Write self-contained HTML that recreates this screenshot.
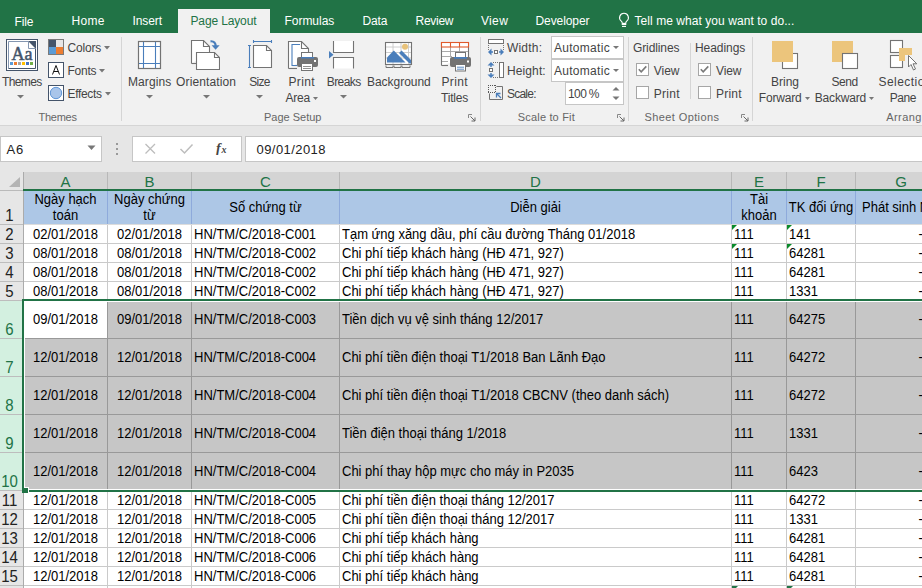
<!DOCTYPE html>
<html><head><meta charset="utf-8"><style>
html,body{margin:0;padding:0}
body{width:922px;height:588px;overflow:hidden;position:relative;background:#fff;font-family:"Liberation Sans",sans-serif}
.t{position:absolute;white-space:nowrap}
.r{position:absolute;display:block}
</style></head><body>
<div class="r" style="left:0px;top:0px;width:922px;height:33px;background:#217346;"></div>
<div class="r" style="left:178px;top:9px;width:92px;height:24px;background:#f1f1f1;"></div>
<div class="t" style="left:14.5px;top:16px;font-size:12px;line-height:12px;color:#fff;letter-spacing:-0.115px;">File</div>
<div class="t" style="left:71.5px;top:15px;font-size:12px;line-height:12px;color:#fff;letter-spacing:0.328px;">Home</div>
<div class="t" style="left:132.5px;top:15px;font-size:12px;line-height:12px;color:#fff;letter-spacing:-0.083px;">Insert</div>
<div class="t" style="left:190.5px;top:15px;font-size:12px;line-height:12px;color:#217346;letter-spacing:-0.139px;">Page Layout</div>
<div class="t" style="left:284.5px;top:15px;font-size:12px;line-height:12px;color:#fff;letter-spacing:-0.031px;">Formulas</div>
<div class="t" style="left:362.5px;top:15px;font-size:12px;line-height:12px;color:#fff;letter-spacing:-0.120px;">Data</div>
<div class="t" style="left:415.5px;top:15px;font-size:12px;line-height:12px;color:#fff;letter-spacing:-0.272px;">Review</div>
<div class="t" style="left:481.0px;top:15px;font-size:12px;line-height:12px;color:#fff;letter-spacing:0.334px;">View</div>
<div class="t" style="left:535.5px;top:15px;font-size:12px;line-height:12px;color:#fff;letter-spacing:-0.088px;">Developer</div>
<div class="t" style="left:634.5px;top:15px;font-size:12px;line-height:12px;color:#fff;letter-spacing:0.059px;">Tell me what you want to do...</div>
<svg class="r" style="left:617px;top:11px" width="14" height="18" viewBox="0 0 14 18"><path d="M7 2.3a4.4 4.4 0 0 0-2.75 7.85c.6.5 1 1.2 1 2v1.3h3.5v-1.3c0-.8.4-1.5 1-2A4.4 4.4 0 0 0 7 2.3z" fill="none" stroke="#fff" stroke-width="1.1"/><path d="M5.1 12.6h3.8" stroke="#fff" stroke-width="1.6"/><path d="M5 15.4h4" stroke="#fff" stroke-width="1.1"/></svg>
<div class="r" style="left:0px;top:33px;width:922px;height:92px;background:#f1f1f1;"></div>
<div class="r" style="left:0px;top:125px;width:922px;height:1px;background:#d5d5d5;"></div>
<div class="r" style="left:121px;top:37px;width:1px;height:84px;background:#d5d5d5;"></div>
<div class="r" style="left:480px;top:37px;width:1px;height:84px;background:#d5d5d5;"></div>
<div class="r" style="left:628px;top:37px;width:1px;height:84px;background:#d5d5d5;"></div>
<div class="r" style="left:752px;top:37px;width:1px;height:84px;background:#d5d5d5;"></div>
<div class="r" style="left:690px;top:43px;width:1px;height:56px;background:#d5d5d5;"></div>
<div class="t" style="left:2.0px;top:76px;font-size:12px;line-height:12px;color:#444;letter-spacing:-0.632px;">Themes</div>
<svg class="r" style="left:17px;top:95px" width="8" height="4" viewBox="0 0 8 4"><path d="M0 0H7L3.5 3.5Z" fill="#777"/></svg>
<div class="t" style="left:38.5px;top:112px;font-size:11px;line-height:11px;color:#666;letter-spacing:-0.250px;">Themes</div>
<div class="t" style="left:67.5px;top:42px;font-size:12px;line-height:12px;color:#444;letter-spacing:-0.197px;">Colors</div>
<div class="t" style="left:67.5px;top:65px;font-size:12px;line-height:12px;color:#444;letter-spacing:-0.254px;">Fonts</div>
<div class="t" style="left:67.5px;top:88px;font-size:12px;line-height:12px;color:#444;letter-spacing:-0.328px;">Effects</div>
<svg class="r" style="left:104px;top:46px" width="7" height="4" viewBox="0 0 7 4"><path d="M0 0H6L3 3.5Z" fill="#777"/></svg>
<svg class="r" style="left:99px;top:69px" width="7" height="4" viewBox="0 0 7 4"><path d="M0 0H6L3 3.5Z" fill="#777"/></svg>
<svg class="r" style="left:105px;top:92px" width="7" height="4" viewBox="0 0 7 4"><path d="M0 0H6L3 3.5Z" fill="#777"/></svg>
<svg class="r" style="left:6px;top:39px" width="32" height="32" viewBox="0 0 32 32"><rect x="0.5" y="0.5" width="31" height="31" fill="#fff" stroke="#44546a"/>
<path d="M2.5 29.5V2.5H22" fill="none" stroke="#8496b0"/>
<path d="M22.5 2.5L29.5 9.5V29.5H2.5" fill="none" stroke="#44546a" stroke-width="1"/>
<path d="M22 2H30V10Z" fill="#44546a"/><path d="M22.5 2.5V9.5H29.5" fill="#fff" stroke="#8496b0"/>
<text x="5.5" y="20.5" font-family="Liberation Serif" font-size="18" fill="#44546a" stroke="#44546a" stroke-width="0.5" textLength="21" lengthAdjust="spacingAndGlyphs">Aa</text>
<rect x="4" y="23" width="3" height="3" fill="#5b9bd5"/><rect x="8" y="23" width="3" height="3" fill="#ed7d31"/>
<rect x="12" y="23" width="3" height="3" fill="#a5a5a5"/><rect x="16" y="23" width="3" height="3" fill="#ffc000"/>
<rect x="20" y="23" width="3" height="3" fill="#4472c4"/><rect x="24" y="23" width="3" height="3" fill="#70ad47"/></svg>
<svg class="r" style="left:48px;top:39px" width="16" height="16" viewBox="0 0 16 16"><rect x="0.5" y="0.5" width="15" height="15" fill="#fff" stroke="#7a7a7a"/><rect x="1" y="1" width="7" height="7" fill="#44546a"/><rect x="8" y="1" width="7" height="7" fill="#e7e6e6"/><rect x="1" y="8" width="7" height="7" fill="#5b9bd5"/><rect x="8" y="8" width="7" height="7" fill="#ed7d31"/></svg>
<svg class="r" style="left:48px;top:62px" width="16" height="16" viewBox="0 0 16 16"><rect x="0.5" y="0.5" width="15" height="15" fill="#fff" stroke="#44546a"/><path d="M4.5 12.5L8 3.5L11.5 12.5M5.8 9.5H10.2" fill="none" stroke="#111" stroke-width="1"/></svg>
<svg class="r" style="left:48px;top:85px" width="16" height="16" viewBox="0 0 16 16"><rect x="0.5" y="0.5" width="15" height="15" fill="#fff" stroke="#44546a"/><circle cx="8" cy="8" r="5.7" fill="#a9c5ea" stroke="#5f95d6" stroke-width="1"/></svg>
<div class="t" style="left:127.9px;top:76px;font-size:12px;line-height:12px;color:#444;letter-spacing:0.119px;">Margins</div>
<div class="t" style="left:176.1px;top:76px;font-size:12px;line-height:12px;color:#444;letter-spacing:0.110px;">Orientation</div>
<div class="t" style="left:249.3px;top:76px;font-size:12px;line-height:12px;color:#444;letter-spacing:-0.715px;">Size</div>
<div class="t" style="left:288.5px;top:76px;font-size:12px;line-height:12px;color:#444;letter-spacing:0.328px;">Print</div>
<div class="t" style="left:285.5px;top:92px;font-size:12px;line-height:12px;color:#444;letter-spacing:-0.220px;">Area</div>
<div class="t" style="left:326.8px;top:76px;font-size:12px;line-height:12px;color:#444;letter-spacing:-0.592px;">Breaks</div>
<div class="t" style="left:366.9px;top:76px;font-size:12px;line-height:12px;color:#444;letter-spacing:-0.016px;">Background</div>
<div class="t" style="left:441.5px;top:76px;font-size:12px;line-height:12px;color:#444;letter-spacing:0.328px;">Print</div>
<div class="t" style="left:441.1px;top:92px;font-size:12px;line-height:12px;color:#444;letter-spacing:-0.207px;">Titles</div>
<div class="t" style="left:264.0px;top:112px;font-size:11px;line-height:11px;color:#666;letter-spacing:0.000px;">Page Setup</div>
<svg class="r" style="left:146px;top:95px" width="8" height="4" viewBox="0 0 8 4"><path d="M0 0H7L3.5 3.5Z" fill="#777"/></svg>
<svg class="r" style="left:203px;top:95px" width="8" height="4" viewBox="0 0 8 4"><path d="M0 0H7L3.5 3.5Z" fill="#777"/></svg>
<svg class="r" style="left:256px;top:95px" width="8" height="4" viewBox="0 0 8 4"><path d="M0 0H7L3.5 3.5Z" fill="#777"/></svg>
<svg class="r" style="left:340px;top:95px" width="8" height="4" viewBox="0 0 8 4"><path d="M0 0H7L3.5 3.5Z" fill="#777"/></svg>
<svg class="r" style="left:313px;top:97px" width="6" height="4" viewBox="0 0 6 4"><path d="M0 0H5L2.5 3Z" fill="#777"/></svg>
<svg class="r" style="left:468px;top:114px" width="8" height="8" viewBox="0 0 8 8"><path d="M0.5 4V0.5H4" fill="none" stroke="#888"/><path d="M2.5 2.5L7 7M7 3.5V7H3.5" fill="none" stroke="#666"/></svg>
<svg class="r" style="left:617px;top:114px" width="8" height="8" viewBox="0 0 8 8"><path d="M0.5 4V0.5H4" fill="none" stroke="#888"/><path d="M2.5 2.5L7 7M7 3.5V7H3.5" fill="none" stroke="#666"/></svg>
<svg class="r" style="left:741px;top:114px" width="8" height="8" viewBox="0 0 8 8"><path d="M0.5 4V0.5H4" fill="none" stroke="#888"/><path d="M2.5 2.5L7 7M7 3.5V7H3.5" fill="none" stroke="#666"/></svg>
<svg class="r" style="left:137px;top:40px" width="26" height="30" viewBox="0 0 26 30"><rect x="1.5" y="1.5" width="22" height="27" fill="#fff" stroke="#737373" stroke-width="1.2"/><path d="M6.5 2V28M18.5 2V28M2 6.5H23M2 23.5H23" stroke="#4a7ebb" stroke-width="1.1"/></svg>
<svg class="r" style="left:190px;top:38px" width="30" height="33" viewBox="0 0 30 33"><path d="M1.5 25.5V2.5H13.5L19.5 8.5V14" fill="#fff" stroke="#737373" stroke-width="1.1"/><path d="M13.5 2.5V8.5H19.5" fill="none" stroke="#737373" stroke-width="1.1"/>
<path d="M6.5 31.5V14.5H24.5L29.5 19.5V31.5Z" fill="#fff" stroke="#737373" stroke-width="1.1"/><path d="M24.5 14.5V19.5H29.5" fill="none" stroke="#737373" stroke-width="1.1"/>
<path d="M20.5 3.3C24 3 25.8 5 25.6 8.5" fill="none" stroke="#4a7ebb" stroke-width="2.2"/><path d="M21.6 7.2H29.6L25.6 11.8Z" fill="#4a7ebb"/><path d="M1.5 25.5H6" stroke="#737373" stroke-width="1.1"/></svg>
<svg class="r" style="left:246px;top:39px" width="28" height="31" viewBox="0 0 28 31"><path d="M7.5 6.5H20.5L25.5 11.5V28.5H7.5Z" fill="#fff" stroke="#737373" stroke-width="1.1"/><path d="M20.5 6.5V11.5H25.5" fill="none" stroke="#737373" stroke-width="1.1"/>
<path d="M7.5 2.5H25.5M7.5 1V4M25.5 1V4" stroke="#4a7ebb" stroke-width="1.1"/><path d="M3.5 6.5V28.5M2 6.5H5M2 28.5H5" stroke="#4a7ebb" stroke-width="1.1"/></svg>
<svg class="r" style="left:287px;top:40px" width="33" height="32" viewBox="0 0 33 32"><path d="M1.5 28.5V1.5H14.5L21.5 8.5V17" fill="#fff" stroke="#737373" stroke-width="1.1"/><path d="M14.5 1.5V8.5H21.5" fill="none" stroke="#737373" stroke-width="1.1"/><path d="M1.5 28.5H10" stroke="#737373" stroke-width="1.1"/>
<path d="M13 4.5H5V25.5H10" fill="none" stroke="#4a7ebb" stroke-width="1.1"/>
<rect x="14.5" y="12.5" width="11" height="6" fill="#fff" stroke="#737373"/>
<rect x="10" y="17" width="21" height="10" rx="2" fill="#737373"/><rect x="14" y="17" width="13" height="1.5" fill="#4a7ebb"/>
<rect x="14.5" y="23.5" width="11" height="7" fill="#fff" stroke="#737373"/><path d="M16 26.5H24M16 28.5H24" stroke="#737373" stroke-width="0.8"/><rect x="27" y="20" width="2" height="2" fill="#fff"/></svg>
<svg class="r" style="left:328px;top:40px" width="28" height="30" viewBox="0 0 28 30"><path d="M5.5 1V12.5H25.5V1" fill="#fff" stroke="#737373" stroke-width="1.1"/><path d="M5.5 28.5V17.5H25.5V28.5" fill="#fff" stroke="#737373" stroke-width="1.1"/>
<path d="M1 11L5.5 14.8L1 18.5Z" fill="#4a7ebb"/></svg>
<svg class="r" style="left:384px;top:41px" width="30" height="28" viewBox="0 0 30 28"><rect x="1.5" y="1.5" width="26" height="22" fill="#fff" stroke="#737373" stroke-width="1.1"/>
<path d="M9 2V23M17 2V23M24.5 2V23M2 6H27M2 11.5H27M2 17H27" stroke="#c8c8c8" stroke-width="0.9"/>
<path d="M3 21.5V16.5L9.8 9.6L21.5 21.5Z" fill="#4a7ebb"/><path d="M15 12L17.6 9.6L27 19V22.5H25.5Z" fill="#4a7ebb"/>
<circle cx="21" cy="5.8" r="3" fill="#e8c27a"/>
<path d="M2 24.5V26.5H9V24.5M10 24.5V26.5H17V24.5M18 24.5V26.5H26V24.5" fill="none" stroke="#737373" stroke-width="1"/></svg>
<svg class="r" style="left:440px;top:41px" width="32" height="31" viewBox="0 0 32 31"><path d="M1.5 24.5V1.5H28.5V16" fill="#fff" stroke="#737373" stroke-width="1.1"/><path d="M1.5 24.5H8" stroke="#737373" stroke-width="1.1"/>
<path d="M2 10.5H28M2 15.5H12M2 20.5H8M10.5 6V15M19.5 6V11" stroke="#a0a0a0" stroke-width="0.9"/>
<rect x="1.5" y="1.5" width="27" height="4.5" fill="#fff" stroke="#e05a2b" stroke-width="1.1"/><path d="M10.5 1.5V6M19.5 1.5V6" stroke="#e05a2b" stroke-width="1.1"/>
<rect x="15.5" y="11.5" width="10" height="6" fill="#fff" stroke="#737373"/>
<rect x="10" y="16" width="21" height="10" rx="2" fill="#737373"/><rect x="14" y="16" width="13" height="1.8" fill="#4a7ebb"/>
<rect x="15.5" y="23.5" width="10" height="6.5" fill="#fff" stroke="#737373"/><path d="M17 26.2H24M17 28.2H24" stroke="#4a7ebb" stroke-width="0.9"/><rect x="27" y="19.5" width="2" height="2" fill="#fff"/></svg>
<div class="t" style="left:506.9px;top:42px;font-size:12px;line-height:12px;color:#444;letter-spacing:0.217px;">Width:</div>
<div class="t" style="left:506.9px;top:65px;font-size:12px;line-height:12px;color:#444;letter-spacing:0.128px;">Height:</div>
<div class="t" style="left:506.9px;top:88px;font-size:12px;line-height:12px;color:#444;letter-spacing:-0.752px;">Scale:</div>
<div class="r" style="left:551px;top:36px;width:73px;height:23px;background:#fff;box-sizing:border-box;border:1px solid #c6c6c6"></div>
<div class="r" style="left:551px;top:59px;width:73px;height:23px;background:#fff;box-sizing:border-box;border:1px solid #c6c6c6"></div>
<div class="r" style="left:565px;top:82px;width:59px;height:23px;background:#fff;box-sizing:border-box;border:1px solid #c6c6c6"></div>
<div class="t" style="left:553.9px;top:42px;font-size:12px;line-height:12px;color:#444;letter-spacing:0.305px;">Automatic</div>
<div class="t" style="left:553.9px;top:65px;font-size:12px;line-height:12px;color:#444;letter-spacing:0.305px;">Automatic</div>
<div class="t" style="left:568.1px;top:88px;font-size:12px;line-height:12px;color:#444;letter-spacing:-0.658px;">100 %</div>
<svg class="r" style="left:613px;top:46px" width="7" height="4" viewBox="0 0 7 4"><path d="M0 0H6L3 3Z" fill="#777"/></svg>
<svg class="r" style="left:613px;top:69px" width="7" height="4" viewBox="0 0 7 4"><path d="M0 0H6L3 3Z" fill="#777"/></svg>
<svg class="r" style="left:612px;top:87px" width="8" height="4" viewBox="0 0 8 4"><path d="M0.5 3.5L4 0L7.5 3.5Z" fill="#777"/></svg>
<svg class="r" style="left:612px;top:96px" width="8" height="4" viewBox="0 0 8 4"><path d="M0.5 0.5L4 4L7.5 0.5Z" fill="#777"/></svg>
<div class="t" style="left:517.8px;top:112px;font-size:11px;line-height:11px;color:#666;letter-spacing:0.170px;">Scale to Fit</div>
<svg class="r" style="left:487px;top:38px" width="18" height="18" viewBox="0 0 18 18"><rect x="1.5" y="1.5" width="15" height="4" fill="#fff" stroke="#737373"/>
<path d="M1.5 7V12M16.5 7V12" stroke="#737373" stroke-dasharray="1 1"/>
<path d="M1 14L4.5 10.5V17.5Z M17 14L13.5 10.5V17.5Z" fill="#4a7ebb"/><path d="M3 14H6M12 14H15" stroke="#4a7ebb" stroke-width="1.4"/><rect x="7.5" y="12.5" width="3" height="3" fill="#fff" stroke="#737373"/></svg>
<svg class="r" style="left:487px;top:61px" width="18" height="18" viewBox="0 0 18 18"><rect x="12.5" y="1.5" width="4" height="15" fill="#fff" stroke="#737373"/>
<path d="M6 1.5H12M6 16.5H12" stroke="#737373" stroke-dasharray="1 1"/>
<path d="M4 1L0.5 4.5H7.5Z M4 17L0.5 13.5H7.5Z" fill="#4a7ebb"/><path d="M4 3V6M4 12V15" stroke="#4a7ebb" stroke-width="1.4"/><rect x="2.5" y="7.5" width="3" height="3" fill="#fff" stroke="#737373"/></svg>
<svg class="r" style="left:487px;top:84px" width="18" height="18" viewBox="0 0 18 18"><path d="M9.5 2.5H15.5V15.5H2.5V9.5" fill="none" stroke="#737373"/>
<path d="M1 1.5H9M1 8.5H9M1.5 1V9M8.5 1V9" fill="none" stroke="#555" stroke-dasharray="1 1"/>
<path d="M14 14L10 10" stroke="#4a7ebb" stroke-width="1.3"/><path d="M9.5 13.5V9.5H13.5" fill="none" stroke="#4a7ebb" stroke-width="1.3"/></svg>
<div class="t" style="left:633.0px;top:42px;font-size:12px;line-height:12px;color:#444;letter-spacing:-0.107px;">Gridlines</div>
<div class="t" style="left:695.0px;top:42px;font-size:12px;line-height:12px;color:#444;letter-spacing:-0.058px;">Headings</div>
<div class="t" style="left:653.7px;top:65px;font-size:12px;line-height:12px;color:#444;letter-spacing:0.001px;">View</div>
<div class="t" style="left:653.7px;top:88px;font-size:12px;line-height:12px;color:#444;letter-spacing:0.278px;">Print</div>
<div class="t" style="left:716.0px;top:65px;font-size:12px;line-height:12px;color:#444;letter-spacing:-0.099px;">View</div>
<div class="t" style="left:716.0px;top:88px;font-size:12px;line-height:12px;color:#444;letter-spacing:0.203px;">Print</div>
<div class="t" style="left:644.5px;top:112px;font-size:11px;line-height:11px;color:#666;letter-spacing:0.398px;">Sheet Options</div>
<svg class="r" style="left:636px;top:63px" width="13" height="13" viewBox="0 0 13 13"><rect x="0.5" y="0.5" width="12" height="12" fill="#fff" stroke="#a6a6a6"/><path d="M2.8 6.3L5.2 8.9L10.3 3.4" fill="none" stroke="#7a7a7a" stroke-width="1.6"/></svg>
<svg class="r" style="left:636px;top:86px" width="13" height="13" viewBox="0 0 13 13"><rect x="0.5" y="0.5" width="12" height="12" fill="#fff" stroke="#a6a6a6"/></svg>
<svg class="r" style="left:698px;top:63px" width="13" height="13" viewBox="0 0 13 13"><rect x="0.5" y="0.5" width="12" height="12" fill="#fff" stroke="#a6a6a6"/><path d="M2.8 6.3L5.2 8.9L10.3 3.4" fill="none" stroke="#7a7a7a" stroke-width="1.6"/></svg>
<svg class="r" style="left:698px;top:86px" width="13" height="13" viewBox="0 0 13 13"><rect x="0.5" y="0.5" width="12" height="12" fill="#fff" stroke="#a6a6a6"/></svg>
<div class="t" style="left:771.0px;top:76px;font-size:12px;line-height:12px;color:#444;letter-spacing:-0.004px;">Bring</div>
<div class="t" style="left:758.8px;top:92px;font-size:12px;line-height:12px;color:#444;letter-spacing:-0.169px;">Forward</div>
<div class="t" style="left:831.5px;top:76px;font-size:12px;line-height:12px;color:#444;letter-spacing:-0.477px;">Send</div>
<div class="t" style="left:814.8px;top:92px;font-size:12px;line-height:12px;color:#444;letter-spacing:-0.184px;">Backward</div>
<div class="t" style="left:878.5px;top:76px;font-size:12px;line-height:12px;color:#444;letter-spacing:0.453px;">Selection</div>
<div class="t" style="left:889.8px;top:92px;font-size:12px;line-height:12px;color:#444;letter-spacing:-0.444px;">Pane</div>
<div class="t" style="left:886.2px;top:112px;font-size:11px;line-height:11px;color:#666;letter-spacing:0.45px">Arrange</div>
<svg class="r" style="left:805px;top:97px" width="6" height="4" viewBox="0 0 6 4"><path d="M0 0H5L2.5 3Z" fill="#777"/></svg>
<svg class="r" style="left:869px;top:97px" width="6" height="4" viewBox="0 0 6 4"><path d="M0 0H5L2.5 3Z" fill="#777"/></svg>
<svg class="r" style="left:771px;top:40px" width="28" height="30" viewBox="0 0 28 30"><rect x="11.5" y="13.5" width="15" height="15" fill="#fff" stroke="#737373" stroke-width="1.1"/><rect x="1" y="1" width="21" height="21" fill="#ecc57c"/></svg>
<svg class="r" style="left:831px;top:40px" width="28" height="30" viewBox="0 0 28 30"><rect x="1" y="1" width="21" height="21" fill="#ecc57c"/><rect x="11.5" y="13.5" width="15" height="15" fill="#fff" stroke="#737373" stroke-width="1.1"/></svg>
<svg class="r" style="left:889px;top:39px" width="33" height="33" viewBox="0 0 33 33"><rect x="1.5" y="1.5" width="12" height="12" fill="#fff" stroke="#737373" stroke-width="1.1"/><rect x="1.5" y="16.5" width="12" height="12" fill="#fff" stroke="#737373" stroke-width="1.1"/>
<path d="M10 9H23V16H16V22H10Z" fill="#ecc57c"/>
<path d="M19.5 16.5V28L22 25.5L24.5 31L26.5 30L24 24.8H27.8Z" fill="#fff" stroke="#737373" stroke-width="1" stroke-linejoin="round"/></svg>
<div class="r" style="left:0px;top:126px;width:922px;height:46px;background:#e6e6e6;"></div>
<div class="r" style="left:0px;top:136px;width:102px;height:26px;background:#fff;box-sizing:border-box;border:1px solid #c6c6c6"></div>
<div class="t" style="left:6.5px;top:143px;font-size:13px;line-height:13px;color:#222;letter-spacing:0.894px;">A6</div>
<svg class="r" style="left:87px;top:145px" width="9" height="6" viewBox="0 0 9 6"><path d="M0.5 0.5H8.5L4.5 5Z" fill="#777"/></svg>
<div class="r" style="left:116px;top:143px;width:2px;height:2px;background:#999;"></div>
<div class="r" style="left:116px;top:148px;width:2px;height:2px;background:#999;"></div>
<div class="r" style="left:116px;top:153px;width:2px;height:2px;background:#999;"></div>
<div class="r" style="left:132px;top:136px;width:110px;height:26px;background:#fff;box-sizing:border-box;border:1px solid #c6c6c6"></div>
<svg class="r" style="left:144px;top:143px" width="13" height="12" viewBox="0 0 13 12"><path d="M1.5 1L11 10.5M11 1L1.5 10.5" stroke="#bdbdbd" stroke-width="1.3"/></svg>
<svg class="r" style="left:179px;top:143px" width="15" height="12" viewBox="0 0 15 12"><path d="M1.5 6L5.5 10L13.5 1.5" fill="none" stroke="#bdbdbd" stroke-width="1.5"/></svg>
<svg class="r" style="left:215px;top:141px" width="16" height="14" viewBox="0 0 16 14"><text x="1" y="12" font-family="Liberation Serif" font-style="italic" font-weight="bold" font-size="14" fill="#444">f</text><text x="6.5" y="12" font-family="Liberation Serif" font-style="italic" font-weight="bold" font-size="10" fill="#444">x</text></svg>
<div class="r" style="left:245px;top:136px;width:677px;height:26px;background:#fff;box-sizing:border-box;border:1px solid #c6c6c6;border-right:none"></div>
<div class="t" style="left:256.5px;top:143px;font-size:13px;line-height:13px;color:#222;letter-spacing:0.436px;">09/01/2018</div>
<div class="r" style="left:0px;top:172px;width:922px;height:416px;background:#fff;"></div>
<div class="r" style="left:24px;top:172px;width:898px;height:17px;background:#d4d4d4;"></div>
<div class="r" style="left:24px;top:191px;width:898px;height:33px;background:#adc7e6;"></div>
<div class="r" style="left:24px;top:301px;width:898px;height:189px;background:#c6c6c6;"></div>
<div class="r" style="left:24px;top:224px;width:898px;height:1px;background:#dcdcdc;"></div>
<div class="r" style="left:24px;top:243px;width:898px;height:1px;background:#cacaca;"></div>
<div class="r" style="left:24px;top:262px;width:898px;height:1px;background:#cacaca;"></div>
<div class="r" style="left:24px;top:281px;width:898px;height:1px;background:#cacaca;"></div>
<div class="r" style="left:24px;top:338px;width:898px;height:1px;background:#999999;"></div>
<div class="r" style="left:24px;top:376px;width:898px;height:1px;background:#999999;"></div>
<div class="r" style="left:24px;top:414px;width:898px;height:1px;background:#999999;"></div>
<div class="r" style="left:24px;top:452px;width:898px;height:1px;background:#999999;"></div>
<div class="r" style="left:24px;top:509px;width:898px;height:1px;background:#cacaca;"></div>
<div class="r" style="left:24px;top:528px;width:898px;height:1px;background:#cacaca;"></div>
<div class="r" style="left:24px;top:547px;width:898px;height:1px;background:#cacaca;"></div>
<div class="r" style="left:24px;top:566px;width:898px;height:1px;background:#cacaca;"></div>
<div class="r" style="left:24px;top:585px;width:898px;height:1px;background:#cacaca;"></div>
<div class="r" style="left:24px;top:604px;width:898px;height:1px;background:#cacaca;"></div>
<div class="r" style="left:107px;top:191px;width:1px;height:33px;background:#8eaadb;"></div>
<div class="r" style="left:107px;top:225px;width:1px;height:74px;background:#cacaca;"></div>
<div class="r" style="left:107px;top:301px;width:1px;height:189px;background:#999999;"></div>
<div class="r" style="left:107px;top:492px;width:1px;height:96px;background:#cacaca;"></div>
<div class="r" style="left:107px;top:172px;width:1px;height:17px;background:#b8b8b8;"></div>
<div class="r" style="left:191px;top:191px;width:1px;height:33px;background:#8eaadb;"></div>
<div class="r" style="left:191px;top:225px;width:1px;height:74px;background:#cacaca;"></div>
<div class="r" style="left:191px;top:301px;width:1px;height:189px;background:#999999;"></div>
<div class="r" style="left:191px;top:492px;width:1px;height:96px;background:#cacaca;"></div>
<div class="r" style="left:191px;top:172px;width:1px;height:17px;background:#b8b8b8;"></div>
<div class="r" style="left:339px;top:191px;width:1px;height:33px;background:#8eaadb;"></div>
<div class="r" style="left:339px;top:225px;width:1px;height:74px;background:#cacaca;"></div>
<div class="r" style="left:339px;top:301px;width:1px;height:189px;background:#999999;"></div>
<div class="r" style="left:339px;top:492px;width:1px;height:96px;background:#cacaca;"></div>
<div class="r" style="left:339px;top:172px;width:1px;height:17px;background:#b8b8b8;"></div>
<div class="r" style="left:731px;top:191px;width:1px;height:33px;background:#8eaadb;"></div>
<div class="r" style="left:731px;top:225px;width:1px;height:74px;background:#cacaca;"></div>
<div class="r" style="left:731px;top:301px;width:1px;height:189px;background:#999999;"></div>
<div class="r" style="left:731px;top:492px;width:1px;height:96px;background:#cacaca;"></div>
<div class="r" style="left:731px;top:172px;width:1px;height:17px;background:#b8b8b8;"></div>
<div class="r" style="left:786px;top:191px;width:1px;height:33px;background:#8eaadb;"></div>
<div class="r" style="left:786px;top:225px;width:1px;height:74px;background:#cacaca;"></div>
<div class="r" style="left:786px;top:301px;width:1px;height:189px;background:#999999;"></div>
<div class="r" style="left:786px;top:492px;width:1px;height:96px;background:#cacaca;"></div>
<div class="r" style="left:786px;top:172px;width:1px;height:17px;background:#b8b8b8;"></div>
<div class="r" style="left:855px;top:191px;width:1px;height:33px;background:#8eaadb;"></div>
<div class="r" style="left:855px;top:225px;width:1px;height:74px;background:#cacaca;"></div>
<div class="r" style="left:855px;top:301px;width:1px;height:189px;background:#999999;"></div>
<div class="r" style="left:855px;top:492px;width:1px;height:96px;background:#cacaca;"></div>
<div class="r" style="left:855px;top:172px;width:1px;height:17px;background:#b8b8b8;"></div>
<div class="r" style="left:24px;top:301px;width:83px;height:37px;background:#fff;"></div>
<div class="r" style="left:0px;top:191px;width:23px;height:397px;background:#e6e6e6;"></div>
<div class="r" style="left:0px;top:301px;width:23px;height:189px;background:#d3f0e0;"></div>
<div class="r" style="left:0px;top:224px;width:23px;height:1px;background:#bdbdbd;"></div>
<div class="r" style="left:0px;top:243px;width:23px;height:1px;background:#bdbdbd;"></div>
<div class="r" style="left:0px;top:262px;width:23px;height:1px;background:#bdbdbd;"></div>
<div class="r" style="left:0px;top:281px;width:23px;height:1px;background:#bdbdbd;"></div>
<div class="r" style="left:0px;top:300px;width:23px;height:1px;background:#bdbdbd;"></div>
<div class="r" style="left:0px;top:338px;width:23px;height:1px;background:#bdbdbd;"></div>
<div class="r" style="left:0px;top:376px;width:23px;height:1px;background:#bdbdbd;"></div>
<div class="r" style="left:0px;top:414px;width:23px;height:1px;background:#bdbdbd;"></div>
<div class="r" style="left:0px;top:452px;width:23px;height:1px;background:#bdbdbd;"></div>
<div class="r" style="left:0px;top:490px;width:23px;height:1px;background:#bdbdbd;"></div>
<div class="r" style="left:0px;top:509px;width:23px;height:1px;background:#bdbdbd;"></div>
<div class="r" style="left:0px;top:528px;width:23px;height:1px;background:#bdbdbd;"></div>
<div class="r" style="left:0px;top:547px;width:23px;height:1px;background:#bdbdbd;"></div>
<div class="r" style="left:0px;top:566px;width:23px;height:1px;background:#bdbdbd;"></div>
<div class="r" style="left:0px;top:585px;width:23px;height:1px;background:#bdbdbd;"></div>
<div class="r" style="left:0px;top:604px;width:23px;height:1px;background:#bdbdbd;"></div>
<div class="r" style="left:23px;top:172px;width:1px;height:416px;background:#ababab;"></div>
<div class="r" style="left:0px;top:172px;width:23px;height:18px;background:#e6e6e6;"></div>
<svg class="r" style="left:6px;top:176px" width="16" height="13" viewBox="0 0 16 13"><path d="M14 1 L14 11 L3 11 Z" fill="#b4b4b4"/></svg>
<div class="r" style="left:0px;top:190px;width:23px;height:1px;background:#bababa;"></div>
<div class="t" style="left:-84.5px;width:300px;text-align:center;top:174px;font-size:15px;line-height:15px;color:#217346;">A</div>
<div class="t" style="left:-0.5px;width:300px;text-align:center;top:174px;font-size:15px;line-height:15px;color:#217346;">B</div>
<div class="t" style="left:115.5px;width:300px;text-align:center;top:174px;font-size:15px;line-height:15px;color:#217346;">C</div>
<div class="t" style="left:385.5px;width:300px;text-align:center;top:174px;font-size:15px;line-height:15px;color:#217346;">D</div>
<div class="t" style="left:609.0px;width:300px;text-align:center;top:174px;font-size:15px;line-height:15px;color:#217346;">E</div>
<div class="t" style="left:671.0px;width:300px;text-align:center;top:174px;font-size:15px;line-height:15px;color:#217346;">F</div>
<div class="t" style="left:751.0px;width:300px;text-align:center;top:174px;font-size:15px;line-height:15px;color:#217346;">G</div>
<div class="r" style="left:23px;top:189px;width:899px;height:2px;background:#217346;"></div>
<div class="t" style="left:-140.5px;width:300px;text-align:center;top:208px;font-size:15px;line-height:15px;color:#222;transform:scaleY(1.04);transform-origin:0 13px;">1</div>
<div class="t" style="left:-140.5px;width:300px;text-align:center;top:227px;font-size:15px;line-height:15px;color:#222;transform:scaleY(1.04);transform-origin:0 13px;">2</div>
<div class="t" style="left:-140.5px;width:300px;text-align:center;top:246px;font-size:15px;line-height:15px;color:#222;transform:scaleY(1.04);transform-origin:0 13px;">3</div>
<div class="t" style="left:-140.5px;width:300px;text-align:center;top:265px;font-size:15px;line-height:15px;color:#222;transform:scaleY(1.04);transform-origin:0 13px;">4</div>
<div class="t" style="left:-140.5px;width:300px;text-align:center;top:284px;font-size:15px;line-height:15px;color:#222;transform:scaleY(1.04);transform-origin:0 13px;">5</div>
<div class="t" style="left:-140.5px;width:300px;text-align:center;top:322px;font-size:15px;line-height:15px;color:#217346;transform:scaleY(1.04);transform-origin:0 13px;">6</div>
<div class="t" style="left:-140.5px;width:300px;text-align:center;top:360px;font-size:15px;line-height:15px;color:#217346;transform:scaleY(1.04);transform-origin:0 13px;">7</div>
<div class="t" style="left:-140.5px;width:300px;text-align:center;top:398px;font-size:15px;line-height:15px;color:#217346;transform:scaleY(1.04);transform-origin:0 13px;">8</div>
<div class="t" style="left:-140.5px;width:300px;text-align:center;top:436px;font-size:15px;line-height:15px;color:#217346;transform:scaleY(1.04);transform-origin:0 13px;">9</div>
<div class="t" style="left:-140.5px;width:300px;text-align:center;top:474px;font-size:15px;line-height:15px;color:#217346;transform:scaleY(1.04);transform-origin:0 13px;">10</div>
<div class="t" style="left:-140.5px;width:300px;text-align:center;top:493px;font-size:15px;line-height:15px;color:#222;transform:scaleY(1.04);transform-origin:0 13px;">11</div>
<div class="t" style="left:-140.5px;width:300px;text-align:center;top:512px;font-size:15px;line-height:15px;color:#222;transform:scaleY(1.04);transform-origin:0 13px;">12</div>
<div class="t" style="left:-140.5px;width:300px;text-align:center;top:531px;font-size:15px;line-height:15px;color:#222;transform:scaleY(1.04);transform-origin:0 13px;">13</div>
<div class="t" style="left:-140.5px;width:300px;text-align:center;top:550px;font-size:15px;line-height:15px;color:#222;transform:scaleY(1.04);transform-origin:0 13px;">14</div>
<div class="t" style="left:-140.5px;width:300px;text-align:center;top:569px;font-size:15px;line-height:15px;color:#222;transform:scaleY(1.04);transform-origin:0 13px;">15</div>
<div class="t" style="left:-84.5px;width:300px;text-align:center;top:193px;font-size:13px;line-height:13px;color:#000;transform:scaleY(1.08);transform-origin:0 11px;">Ngày hạch</div>
<div class="t" style="left:-84.5px;width:300px;text-align:center;top:209px;font-size:13px;line-height:13px;color:#000;transform:scaleY(1.08);transform-origin:0 11px;">toán</div>
<div class="t" style="left:-0.5px;width:300px;text-align:center;top:193px;font-size:13px;line-height:13px;color:#000;transform:scaleY(1.08);transform-origin:0 11px;">Ngày chứng</div>
<div class="t" style="left:-0.5px;width:300px;text-align:center;top:209px;font-size:13px;line-height:13px;color:#000;transform:scaleY(1.08);transform-origin:0 11px;">từ</div>
<div class="t" style="left:115.5px;width:300px;text-align:center;top:201px;font-size:13px;line-height:13px;color:#000;transform:scaleY(1.08);transform-origin:0 11px;">Số chứng từ</div>
<div class="t" style="left:385.5px;width:300px;text-align:center;top:201px;font-size:13px;line-height:13px;color:#000;transform:scaleY(1.08);transform-origin:0 11px;">Diễn giải</div>
<div class="t" style="left:609.0px;width:300px;text-align:center;top:193px;font-size:13px;line-height:13px;color:#000;transform:scaleY(1.08);transform-origin:0 11px;">Tài</div>
<div class="t" style="left:609.0px;width:300px;text-align:center;top:209px;font-size:13px;line-height:13px;color:#000;transform:scaleY(1.08);transform-origin:0 11px;">khoản</div>
<div class="t" style="left:671.0px;width:300px;text-align:center;top:201px;font-size:13px;line-height:13px;color:#000;transform:scaleY(1.08);transform-origin:0 11px;">TK đối ứng</div>
<div class="t" style="left:862px;top:201px;font-size:13px;line-height:13px;color:#000;transform:scaleY(1.08);transform-origin:0 11px;">Phát sinh Nợ</div>
<div class="t" style="left:-84.5px;width:300px;text-align:center;top:228px;font-size:13px;line-height:13px;color:#000;transform:scaleY(1.08);transform-origin:0 11px;">02/01/2018</div>
<div class="t" style="left:-0.5px;width:300px;text-align:center;top:228px;font-size:13px;line-height:13px;color:#000;transform:scaleY(1.08);transform-origin:0 11px;">02/01/2018</div>
<div class="t" style="left:194px;top:228px;font-size:13px;line-height:13px;color:#000;transform:scaleY(1.08);transform-origin:0 11px;">HN/TM/C/2018-C001</div>
<div class="t" style="left:342px;top:228px;font-size:13px;line-height:13px;color:#000;transform:scaleY(1.08);transform-origin:0 11px;">Tạm ứng xăng dầu, phí cầu đường Tháng 01/2018</div>
<div class="t" style="left:734px;top:228px;font-size:13px;line-height:13px;color:#000;transform:scaleY(1.08);transform-origin:0 11px;">111</div>
<div class="t" style="left:789px;top:228px;font-size:13px;line-height:13px;color:#000;transform:scaleY(1.08);transform-origin:0 11px;">141</div>
<div class="t" style="left:918.5px;top:228px;font-size:13px;line-height:13px;color:#000;transform:scaleY(1.08);transform-origin:0 11px;">-</div>
<div class="t" style="left:-84.5px;width:300px;text-align:center;top:247px;font-size:13px;line-height:13px;color:#000;transform:scaleY(1.08);transform-origin:0 11px;">08/01/2018</div>
<div class="t" style="left:-0.5px;width:300px;text-align:center;top:247px;font-size:13px;line-height:13px;color:#000;transform:scaleY(1.08);transform-origin:0 11px;">08/01/2018</div>
<div class="t" style="left:194px;top:247px;font-size:13px;line-height:13px;color:#000;transform:scaleY(1.08);transform-origin:0 11px;">HN/TM/C/2018-C002</div>
<div class="t" style="left:342px;top:247px;font-size:13px;line-height:13px;color:#000;transform:scaleY(1.08);transform-origin:0 11px;">Chi phí tiếp khách hàng (HĐ 471, 927)</div>
<div class="t" style="left:734px;top:247px;font-size:13px;line-height:13px;color:#000;transform:scaleY(1.08);transform-origin:0 11px;">111</div>
<div class="t" style="left:789px;top:247px;font-size:13px;line-height:13px;color:#000;transform:scaleY(1.08);transform-origin:0 11px;">64281</div>
<div class="t" style="left:918.5px;top:247px;font-size:13px;line-height:13px;color:#000;transform:scaleY(1.08);transform-origin:0 11px;">-</div>
<div class="t" style="left:-84.5px;width:300px;text-align:center;top:266px;font-size:13px;line-height:13px;color:#000;transform:scaleY(1.08);transform-origin:0 11px;">08/01/2018</div>
<div class="t" style="left:-0.5px;width:300px;text-align:center;top:266px;font-size:13px;line-height:13px;color:#000;transform:scaleY(1.08);transform-origin:0 11px;">08/01/2018</div>
<div class="t" style="left:194px;top:266px;font-size:13px;line-height:13px;color:#000;transform:scaleY(1.08);transform-origin:0 11px;">HN/TM/C/2018-C002</div>
<div class="t" style="left:342px;top:266px;font-size:13px;line-height:13px;color:#000;transform:scaleY(1.08);transform-origin:0 11px;">Chi phí tiếp khách hàng (HĐ 471, 927)</div>
<div class="t" style="left:734px;top:266px;font-size:13px;line-height:13px;color:#000;transform:scaleY(1.08);transform-origin:0 11px;">111</div>
<div class="t" style="left:789px;top:266px;font-size:13px;line-height:13px;color:#000;transform:scaleY(1.08);transform-origin:0 11px;">64281</div>
<div class="t" style="left:918.5px;top:266px;font-size:13px;line-height:13px;color:#000;transform:scaleY(1.08);transform-origin:0 11px;">-</div>
<div class="t" style="left:-84.5px;width:300px;text-align:center;top:285px;font-size:13px;line-height:13px;color:#000;transform:scaleY(1.08);transform-origin:0 11px;">08/01/2018</div>
<div class="t" style="left:-0.5px;width:300px;text-align:center;top:285px;font-size:13px;line-height:13px;color:#000;transform:scaleY(1.08);transform-origin:0 11px;">08/01/2018</div>
<div class="t" style="left:194px;top:285px;font-size:13px;line-height:13px;color:#000;transform:scaleY(1.08);transform-origin:0 11px;">HN/TM/C/2018-C002</div>
<div class="t" style="left:342px;top:285px;font-size:13px;line-height:13px;color:#000;transform:scaleY(1.08);transform-origin:0 11px;">Chi phí tiếp khách hàng (HĐ 471, 927)</div>
<div class="t" style="left:734px;top:285px;font-size:13px;line-height:13px;color:#000;transform:scaleY(1.08);transform-origin:0 11px;">111</div>
<div class="t" style="left:789px;top:285px;font-size:13px;line-height:13px;color:#000;transform:scaleY(1.08);transform-origin:0 11px;">1331</div>
<div class="t" style="left:918.5px;top:285px;font-size:13px;line-height:13px;color:#000;transform:scaleY(1.08);transform-origin:0 11px;">-</div>
<div class="t" style="left:-84.5px;width:300px;text-align:center;top:313px;font-size:13px;line-height:13px;color:#000;transform:scaleY(1.08);transform-origin:0 11px;">09/01/2018</div>
<div class="t" style="left:-0.5px;width:300px;text-align:center;top:313px;font-size:13px;line-height:13px;color:#000;transform:scaleY(1.08);transform-origin:0 11px;">09/01/2018</div>
<div class="t" style="left:194px;top:313px;font-size:13px;line-height:13px;color:#000;transform:scaleY(1.08);transform-origin:0 11px;">HN/TM/C/2018-C003</div>
<div class="t" style="left:342px;top:313px;font-size:13px;line-height:13px;color:#000;transform:scaleY(1.08);transform-origin:0 11px;">Tiền dịch vụ vệ sinh tháng 12/2017</div>
<div class="t" style="left:734px;top:313px;font-size:13px;line-height:13px;color:#000;transform:scaleY(1.08);transform-origin:0 11px;">111</div>
<div class="t" style="left:789px;top:313px;font-size:13px;line-height:13px;color:#000;transform:scaleY(1.08);transform-origin:0 11px;">64275</div>
<div class="t" style="left:918.5px;top:313px;font-size:13px;line-height:13px;color:#000;transform:scaleY(1.08);transform-origin:0 11px;">-</div>
<div class="t" style="left:-84.5px;width:300px;text-align:center;top:351px;font-size:13px;line-height:13px;color:#000;transform:scaleY(1.08);transform-origin:0 11px;">12/01/2018</div>
<div class="t" style="left:-0.5px;width:300px;text-align:center;top:351px;font-size:13px;line-height:13px;color:#000;transform:scaleY(1.08);transform-origin:0 11px;">12/01/2018</div>
<div class="t" style="left:194px;top:351px;font-size:13px;line-height:13px;color:#000;transform:scaleY(1.08);transform-origin:0 11px;">HN/TM/C/2018-C004</div>
<div class="t" style="left:342px;top:351px;font-size:13px;line-height:13px;color:#000;transform:scaleY(1.08);transform-origin:0 11px;">Chi phí tiền điện thoại T1/2018 Ban Lãnh Đạo</div>
<div class="t" style="left:734px;top:351px;font-size:13px;line-height:13px;color:#000;transform:scaleY(1.08);transform-origin:0 11px;">111</div>
<div class="t" style="left:789px;top:351px;font-size:13px;line-height:13px;color:#000;transform:scaleY(1.08);transform-origin:0 11px;">64272</div>
<div class="t" style="left:918.5px;top:351px;font-size:13px;line-height:13px;color:#000;transform:scaleY(1.08);transform-origin:0 11px;">-</div>
<div class="t" style="left:-84.5px;width:300px;text-align:center;top:389px;font-size:13px;line-height:13px;color:#000;transform:scaleY(1.08);transform-origin:0 11px;">12/01/2018</div>
<div class="t" style="left:-0.5px;width:300px;text-align:center;top:389px;font-size:13px;line-height:13px;color:#000;transform:scaleY(1.08);transform-origin:0 11px;">12/01/2018</div>
<div class="t" style="left:194px;top:389px;font-size:13px;line-height:13px;color:#000;transform:scaleY(1.08);transform-origin:0 11px;">HN/TM/C/2018-C004</div>
<div class="t" style="left:342px;top:389px;font-size:13px;line-height:13px;color:#000;transform:scaleY(1.08);transform-origin:0 11px;">Chi phí tiền điện thoại T1/2018 CBCNV (theo danh sách)</div>
<div class="t" style="left:734px;top:389px;font-size:13px;line-height:13px;color:#000;transform:scaleY(1.08);transform-origin:0 11px;">111</div>
<div class="t" style="left:789px;top:389px;font-size:13px;line-height:13px;color:#000;transform:scaleY(1.08);transform-origin:0 11px;">64272</div>
<div class="t" style="left:918.5px;top:389px;font-size:13px;line-height:13px;color:#000;transform:scaleY(1.08);transform-origin:0 11px;">-</div>
<div class="t" style="left:-84.5px;width:300px;text-align:center;top:427px;font-size:13px;line-height:13px;color:#000;transform:scaleY(1.08);transform-origin:0 11px;">12/01/2018</div>
<div class="t" style="left:-0.5px;width:300px;text-align:center;top:427px;font-size:13px;line-height:13px;color:#000;transform:scaleY(1.08);transform-origin:0 11px;">12/01/2018</div>
<div class="t" style="left:194px;top:427px;font-size:13px;line-height:13px;color:#000;transform:scaleY(1.08);transform-origin:0 11px;">HN/TM/C/2018-C004</div>
<div class="t" style="left:342px;top:427px;font-size:13px;line-height:13px;color:#000;transform:scaleY(1.08);transform-origin:0 11px;">Tiền điện thoại tháng 1/2018</div>
<div class="t" style="left:734px;top:427px;font-size:13px;line-height:13px;color:#000;transform:scaleY(1.08);transform-origin:0 11px;">111</div>
<div class="t" style="left:789px;top:427px;font-size:13px;line-height:13px;color:#000;transform:scaleY(1.08);transform-origin:0 11px;">1331</div>
<div class="t" style="left:918.5px;top:427px;font-size:13px;line-height:13px;color:#000;transform:scaleY(1.08);transform-origin:0 11px;">-</div>
<div class="t" style="left:-84.5px;width:300px;text-align:center;top:465px;font-size:13px;line-height:13px;color:#000;transform:scaleY(1.08);transform-origin:0 11px;">12/01/2018</div>
<div class="t" style="left:-0.5px;width:300px;text-align:center;top:465px;font-size:13px;line-height:13px;color:#000;transform:scaleY(1.08);transform-origin:0 11px;">12/01/2018</div>
<div class="t" style="left:194px;top:465px;font-size:13px;line-height:13px;color:#000;transform:scaleY(1.08);transform-origin:0 11px;">HN/TM/C/2018-C004</div>
<div class="t" style="left:342px;top:465px;font-size:13px;line-height:13px;color:#000;transform:scaleY(1.08);transform-origin:0 11px;">Chi phí thay hộp mực cho máy in P2035</div>
<div class="t" style="left:734px;top:465px;font-size:13px;line-height:13px;color:#000;transform:scaleY(1.08);transform-origin:0 11px;">111</div>
<div class="t" style="left:789px;top:465px;font-size:13px;line-height:13px;color:#000;transform:scaleY(1.08);transform-origin:0 11px;">6423</div>
<div class="t" style="left:918.5px;top:465px;font-size:13px;line-height:13px;color:#000;transform:scaleY(1.08);transform-origin:0 11px;">-</div>
<div class="t" style="left:-84.5px;width:300px;text-align:center;top:494px;font-size:13px;line-height:13px;color:#000;transform:scaleY(1.08);transform-origin:0 11px;">12/01/2018</div>
<div class="t" style="left:-0.5px;width:300px;text-align:center;top:494px;font-size:13px;line-height:13px;color:#000;transform:scaleY(1.08);transform-origin:0 11px;">12/01/2018</div>
<div class="t" style="left:194px;top:494px;font-size:13px;line-height:13px;color:#000;transform:scaleY(1.08);transform-origin:0 11px;">HN/TM/C/2018-C005</div>
<div class="t" style="left:342px;top:494px;font-size:13px;line-height:13px;color:#000;transform:scaleY(1.08);transform-origin:0 11px;">Chi phí tiền điện thoại tháng 12/2017</div>
<div class="t" style="left:734px;top:494px;font-size:13px;line-height:13px;color:#000;transform:scaleY(1.08);transform-origin:0 11px;">111</div>
<div class="t" style="left:789px;top:494px;font-size:13px;line-height:13px;color:#000;transform:scaleY(1.08);transform-origin:0 11px;">64272</div>
<div class="t" style="left:918.5px;top:494px;font-size:13px;line-height:13px;color:#000;transform:scaleY(1.08);transform-origin:0 11px;">-</div>
<div class="t" style="left:-84.5px;width:300px;text-align:center;top:513px;font-size:13px;line-height:13px;color:#000;transform:scaleY(1.08);transform-origin:0 11px;">12/01/2018</div>
<div class="t" style="left:-0.5px;width:300px;text-align:center;top:513px;font-size:13px;line-height:13px;color:#000;transform:scaleY(1.08);transform-origin:0 11px;">12/01/2018</div>
<div class="t" style="left:194px;top:513px;font-size:13px;line-height:13px;color:#000;transform:scaleY(1.08);transform-origin:0 11px;">HN/TM/C/2018-C005</div>
<div class="t" style="left:342px;top:513px;font-size:13px;line-height:13px;color:#000;transform:scaleY(1.08);transform-origin:0 11px;">Chi phí tiền điện thoại tháng 12/2017</div>
<div class="t" style="left:734px;top:513px;font-size:13px;line-height:13px;color:#000;transform:scaleY(1.08);transform-origin:0 11px;">111</div>
<div class="t" style="left:789px;top:513px;font-size:13px;line-height:13px;color:#000;transform:scaleY(1.08);transform-origin:0 11px;">1331</div>
<div class="t" style="left:918.5px;top:513px;font-size:13px;line-height:13px;color:#000;transform:scaleY(1.08);transform-origin:0 11px;">-</div>
<div class="t" style="left:-84.5px;width:300px;text-align:center;top:532px;font-size:13px;line-height:13px;color:#000;transform:scaleY(1.08);transform-origin:0 11px;">12/01/2018</div>
<div class="t" style="left:-0.5px;width:300px;text-align:center;top:532px;font-size:13px;line-height:13px;color:#000;transform:scaleY(1.08);transform-origin:0 11px;">12/01/2018</div>
<div class="t" style="left:194px;top:532px;font-size:13px;line-height:13px;color:#000;transform:scaleY(1.08);transform-origin:0 11px;">HN/TM/C/2018-C006</div>
<div class="t" style="left:342px;top:532px;font-size:13px;line-height:13px;color:#000;transform:scaleY(1.08);transform-origin:0 11px;">Chi phí tiếp khách hàng</div>
<div class="t" style="left:734px;top:532px;font-size:13px;line-height:13px;color:#000;transform:scaleY(1.08);transform-origin:0 11px;">111</div>
<div class="t" style="left:789px;top:532px;font-size:13px;line-height:13px;color:#000;transform:scaleY(1.08);transform-origin:0 11px;">64281</div>
<div class="t" style="left:918.5px;top:532px;font-size:13px;line-height:13px;color:#000;transform:scaleY(1.08);transform-origin:0 11px;">-</div>
<div class="t" style="left:-84.5px;width:300px;text-align:center;top:551px;font-size:13px;line-height:13px;color:#000;transform:scaleY(1.08);transform-origin:0 11px;">12/01/2018</div>
<div class="t" style="left:-0.5px;width:300px;text-align:center;top:551px;font-size:13px;line-height:13px;color:#000;transform:scaleY(1.08);transform-origin:0 11px;">12/01/2018</div>
<div class="t" style="left:194px;top:551px;font-size:13px;line-height:13px;color:#000;transform:scaleY(1.08);transform-origin:0 11px;">HN/TM/C/2018-C006</div>
<div class="t" style="left:342px;top:551px;font-size:13px;line-height:13px;color:#000;transform:scaleY(1.08);transform-origin:0 11px;">Chi phí tiếp khách hàng</div>
<div class="t" style="left:734px;top:551px;font-size:13px;line-height:13px;color:#000;transform:scaleY(1.08);transform-origin:0 11px;">111</div>
<div class="t" style="left:789px;top:551px;font-size:13px;line-height:13px;color:#000;transform:scaleY(1.08);transform-origin:0 11px;">64281</div>
<div class="t" style="left:918.5px;top:551px;font-size:13px;line-height:13px;color:#000;transform:scaleY(1.08);transform-origin:0 11px;">-</div>
<div class="t" style="left:-84.5px;width:300px;text-align:center;top:570px;font-size:13px;line-height:13px;color:#000;transform:scaleY(1.08);transform-origin:0 11px;">12/01/2018</div>
<div class="t" style="left:-0.5px;width:300px;text-align:center;top:570px;font-size:13px;line-height:13px;color:#000;transform:scaleY(1.08);transform-origin:0 11px;">12/01/2018</div>
<div class="t" style="left:194px;top:570px;font-size:13px;line-height:13px;color:#000;transform:scaleY(1.08);transform-origin:0 11px;">HN/TM/C/2018-C006</div>
<div class="t" style="left:342px;top:570px;font-size:13px;line-height:13px;color:#000;transform:scaleY(1.08);transform-origin:0 11px;">Chi phí tiếp khách hàng</div>
<div class="t" style="left:734px;top:570px;font-size:13px;line-height:13px;color:#000;transform:scaleY(1.08);transform-origin:0 11px;">111</div>
<div class="t" style="left:789px;top:570px;font-size:13px;line-height:13px;color:#000;transform:scaleY(1.08);transform-origin:0 11px;">64281</div>
<div class="t" style="left:918.5px;top:570px;font-size:13px;line-height:13px;color:#000;transform:scaleY(1.08);transform-origin:0 11px;">-</div>
<svg class="r" style="left:732px;top:225px" width="5" height="5" viewBox="0 0 5 5"><path d="M0 0H5L0 5Z" fill="#0a8a2a"/></svg>
<svg class="r" style="left:787px;top:225px" width="5" height="5" viewBox="0 0 5 5"><path d="M0 0H5L0 5Z" fill="#0a8a2a"/></svg>
<svg class="r" style="left:732px;top:244px" width="5" height="5" viewBox="0 0 5 5"><path d="M0 0H5L0 5Z" fill="#0a8a2a"/></svg>
<svg class="r" style="left:787px;top:244px" width="5" height="5" viewBox="0 0 5 5"><path d="M0 0H5L0 5Z" fill="#0a8a2a"/></svg>
<svg class="r" style="left:732px;top:586px" width="6" height="2" viewBox="0 0 6 2"><path d="M0 0H6L4 2H0Z" fill="#217346"/></svg>
<svg class="r" style="left:787px;top:586px" width="6" height="2" viewBox="0 0 6 2"><path d="M0 0H6L4 2H0Z" fill="#217346"/></svg>
<div class="r" style="left:22px;top:299px;width:900px;height:2px;background:#217346;"></div>
<div class="r" style="left:22px;top:490px;width:900px;height:2px;background:#217346;"></div>
<div class="r" style="left:22px;top:299px;width:2px;height:193px;background:#217346;"></div>
<div class="r" style="left:24px;top:301px;width:898px;height:1px;background:#fff;"></div>
<div class="r" style="left:24px;top:489px;width:898px;height:1px;background:#fff;"></div>
<div class="r" style="left:24px;top:301px;width:1px;height:189px;background:#fff;"></div>
<div class="r" style="left:24px;top:487px;width:5px;height:1px;background:#fff;"></div>
<div class="r" style="left:28px;top:487px;width:1px;height:6px;background:#fff;"></div>
<div class="r" style="left:22px;top:488px;width:6px;height:5px;background:#217346;"></div>
</body></html>
